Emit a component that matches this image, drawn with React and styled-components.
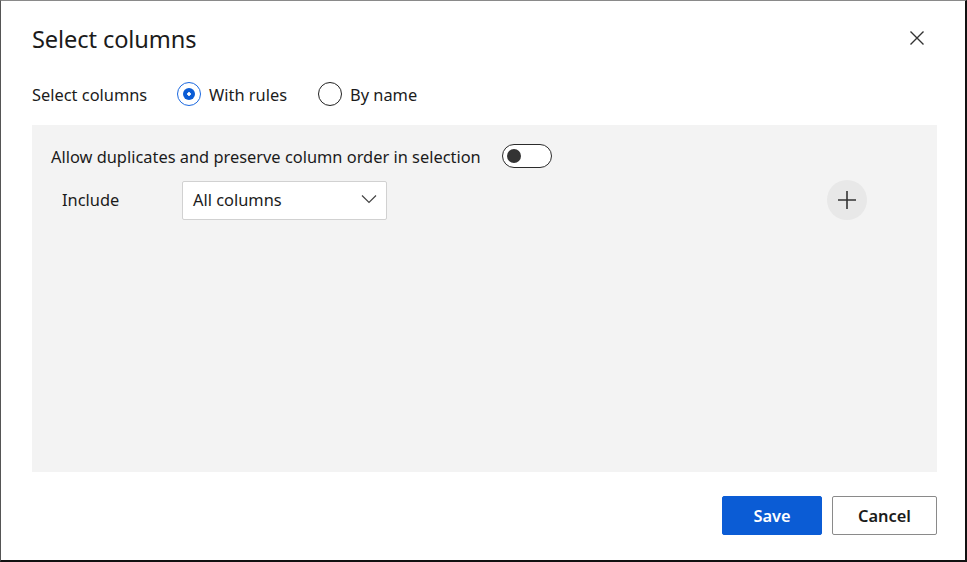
import React, { useState } from "react";
import styled, { createGlobalStyle } from "styled-components";

const Global = createGlobalStyle`
  html, body { margin: 0; padding: 0; background: #ffffff; }
  body { font-family: "Noto Sans", "Open Sans", sans-serif; color: #1b1b1b; }
  * { box-sizing: border-box; }
`;

const Frame = styled.div`
  width: 967px;
  height: 562px;
  background: #fff;
  border-top: 1px solid #8a8a8a;
  border-left: 1px solid #555;
  border-right: 2px solid #111;
  border-bottom: 2px solid #111;
  display: flex;
  flex-direction: column;
  padding: 0 28px 0 31px;
`;

const Header = styled.div`
  display: flex;
  align-items: center;
  justify-content: space-between;
  height: 77px;
`;

const Title = styled.h1`
  margin: 0;
  margin-top: -2px;
  font-size: 23.6px;
  font-weight: 400;
  color: #1b1b1b;
  letter-spacing: -0.1px;
`;

const CloseButton = styled.button`
  border: none;
  background: transparent;
  width: 24px;
  height: 24px;
  padding: 0;
  margin-right: 8px;
  margin-top: -4px;
  display: flex;
  align-items: center;
  justify-content: center;
  color: #333;
`;

const ModeRow = styled.div`
  display: flex;
  align-items: center;
  height: 36px;
  margin-top: -2px;
  font-size: 16.4px;
`;

const ModeLabel = styled.span`
  width: 145px;
`;

const RadioOption = styled.label`
  display: flex;
  align-items: center;
  gap: 8px;
  margin-right: 31px;
`;

const RadioCircle = styled.span`
  width: 24px;
  height: 24px;
  border-radius: 50%;
  border: 1.5px solid ${(p) => (p.$checked ? "#1a68e0" : "#222")};
  display: flex;
  align-items: center;
  justify-content: center;
  &::after {
    content: "";
    display: ${(p) => (p.$checked ? "block" : "none")};
    width: 12px;
    height: 12px;
    border-radius: 50%;
    background: radial-gradient(circle, #fff 0 1.5px, #0b5cd5 2px);
  }
`;

const Panel = styled.div`
  margin-top: 13px;
  height: 347px;
  background: #f3f3f3;
  padding: 18px 19px 0 19px;
  display: flex;
  flex-direction: column;
`;

const ToggleRow = styled.div`
  display: flex;
  align-items: center;
  gap: 20px;
  font-size: 16.4px;
  height: 26px;
`;

const Toggle = styled.span`
  width: 50px;
  height: 24px;
  margin-left: 1px;
  border: 1.5px solid #2b2b2b;
  border-radius: 12px;
  display: flex;
  align-items: center;
  padding-left: 4px;
  background: #fff;
  &::after {
    content: "";
    width: 14px;
    height: 14px;
    border-radius: 50%;
    background: #333;
  }
`;

const RuleRow = styled.div`
  display: flex;
  align-items: center;
  margin-top: 11px;
  padding-left: 11px;
`;

const RuleLabel = styled.span`
  width: 120px;
  font-size: 16.4px;
  margin-top: -2px;
`;

const Select = styled.div`
  width: 205px;
  height: 39px;
  background: #fff;
  border: 1px solid #d1d1d1;
  border-radius: 2px;
  display: flex;
  align-items: center;
  justify-content: space-between;
  padding: 0 9px 2px 10px;
  font-size: 16.4px;
`;

const AddButton = styled.button`
  margin-left: auto;
  margin-right: 51px;
  width: 40px;
  height: 40px;
  border-radius: 50%;
  border: none;
  background: #e8e8e8;
  display: flex;
  align-items: center;
  justify-content: center;
  padding: 0;
`;

const Footer = styled.div`
  display: flex;
  justify-content: flex-end;
  gap: 10px;
  margin-top: 24px;
`;

const Button = styled.button`
  height: 39px;
  width: ${(p) => p.$w}px;
  border-radius: 2px;
  font-family: inherit;
  font-size: 16.4px;
  font-weight: 600;
  background: ${(p) => (p.$primary ? "#0b5cd5" : "#fff")};
  color: ${(p) => (p.$primary ? "#fff" : "#1b1b1b")};
  border: 1px solid ${(p) => (p.$primary ? "#0b5cd5" : "#8a8a8a")};
`;

export default function App() {
  const [mode, setMode] = useState("rules");
  return (
    <>
      <Global />
      <Frame>
        <Header>
          <Title>Select columns</Title>
          <CloseButton aria-label="Close">
            <svg width="16" height="16" viewBox="0 0 16 16">
              <path d="M1.5 1.5 L14.5 14.5 M14.5 1.5 L1.5 14.5" stroke="#333" strokeWidth="1.4" fill="none" />
            </svg>
          </CloseButton>
        </Header>
        <ModeRow>
          <ModeLabel>Select columns</ModeLabel>
          <RadioOption onClick={() => setMode("rules")}>
            <RadioCircle $checked={mode === "rules"} />
            With rules
          </RadioOption>
          <RadioOption onClick={() => setMode("name")}>
            <RadioCircle $checked={mode === "name"} />
            By name
          </RadioOption>
        </ModeRow>
        <Panel>
          <ToggleRow>
            Allow duplicates and preserve column order in selection
            <Toggle />
          </ToggleRow>
          <RuleRow>
            <RuleLabel>Include</RuleLabel>
            <Select>
              All columns
              <svg width="16" height="10" viewBox="0 0 16 10">
                <path d="M1 1.5 L8 8.5 L15 1.5" stroke="#444" strokeWidth="1.2" fill="none" />
              </svg>
            </Select>
            <AddButton aria-label="Add rule">
              <svg width="20" height="20" viewBox="0 0 20 20">
                <path d="M10 1 V19 M1 10 H19" stroke="#333" strokeWidth="1.6" fill="none" />
              </svg>
            </AddButton>
          </RuleRow>
        </Panel>
        <Footer>
          <Button $primary $w={100}>Save</Button>
          <Button $w={105}>Cancel</Button>
        </Footer>
      </Frame>
    </>
  );
}
